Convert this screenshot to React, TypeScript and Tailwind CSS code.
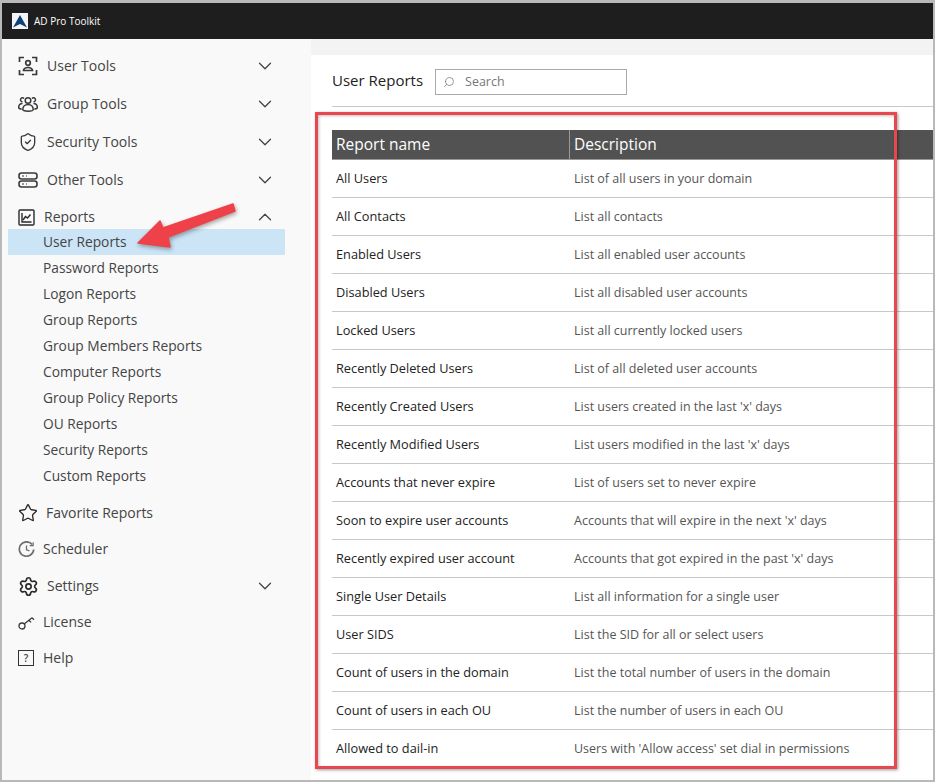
import { ChevronDown, ChevronUp, Search, Settings, ShieldCheck, Star } from "lucide-react";
import type { ReactNode } from "react";

const reports = [
  ["All Users", "List of all users in your domain"],
  ["All Contacts", "List all contacts"],
  ["Enabled Users", "List all enabled user accounts"],
  ["Disabled Users", "List all disabled user accounts"],
  ["Locked Users", "List all currently locked users"],
  ["Recently Deleted Users", "List of all deleted user accounts"],
  ["Recently Created Users", "List users created in the last 'x' days"],
  ["Recently Modified Users", "List users modified in the last 'x' days"],
  ["Accounts that never expire", "List of users set to never expire"],
  ["Soon to expire user accounts", "Accounts that will expire in the next 'x' days"],
  ["Recently expired user account", "Accounts that got expired in the past 'x' days"],
  ["Single User Details", "List all information for a single user"],
  ["User SIDS", "List the SID for all or select users"],
  ["Count of users in the domain", "List the total number of users in the domain"],
  ["Count of users in each OU", "List the number of users in each OU"],
  ["Allowed to dail-in", "Users with 'Allow access' set dial in permissions"],
];

const subItems = [
  "Password Reports",
  "Logon Reports",
  "Group Reports",
  "Group Members Reports",
  "Computer Reports",
  "Group Policy Reports",
  "OU Reports",
  "Security Reports",
  "Custom Reports",
];

function UserToolsIcon() {
  return (
    <svg width="20" height="20" viewBox="0 0 20 20" fill="none" stroke="#3a3a3a" strokeWidth="1.700">
      <path d="M1.500 6V1.500H6M14 1.500H18.500V6M1.500 14V18.500H6M14 18.500H18.500V14" />
      <circle cx="10" cy="7" r="2.300" />
      <path d="M5.500 14.500c.4-2 2.300-3 4.500-3s4.100 1 4.500 3z" />
    </svg>
  );
}

function GroupIcon() {
  return (
    <svg width="20" height="18" viewBox="0 0 20 18" fill="none" stroke="#3a3a3a" strokeWidth="1.500">
      <circle cx="10" cy="5.500" r="2.800" />
      <path d="M6 3.500a2 2 0 1 0-1.500 3.300M14 3.500a2 2 0 1 1 1.500 3.300" />
      <path d="M4.800 14.500c0-3 2.200-5 5.200-5s5.200 2 5.200 5c0 2.200-10.400 2.200-10.400 0z" />
      <path d="M4.500 8.500c-2.300 0-3.800 1.700-3.800 4 0 1 1.300 1.500 3 1.500M15.500 8.500c2.300 0 3.800 1.700 3.800 4 0 1-1.300 1.500-3 1.500" />
    </svg>
  );
}

function ServerIcon() {
  return (
    <svg width="20" height="16" viewBox="0 0 20 16" fill="none" stroke="#3a3a3a" strokeWidth="1.600">
      <rect x="1" y="1" width="18" height="6" rx="2.500" />
      <rect x="1" y="9" width="18" height="6" rx="2.500" />
      <path d="M4 4h2M8 4h1M4 12h2M8 12h1" strokeWidth="1.200" />
    </svg>
  );
}

function ChartIcon() {
  return (
    <svg width="17" height="17" viewBox="0 0 17 17" fill="none" stroke="#2a2a2a" strokeWidth="1.400">
      <rect x="1" y="1" width="15" height="15" rx="1" />
      <path d="M4 4V13H13.500" />
      <path d="M5 11l2.500-3.500 2 1.500 3-3.500" />
    </svg>
  );
}

function ClockIcon() {
  return (
    <svg width="17" height="17" viewBox="0 0 17 17" fill="none" stroke="#6e6e6e" strokeWidth="1.700">
      <path d="M14.200 3.600A7.200 7.200 0 1 0 15.700 8.500" />
      <path d="M15.200 1.200v3.500h-3.500" strokeWidth="1.200" />
      <path d="M8.500 4.500v4.300l3 1" strokeWidth="1.300" />
    </svg>
  );
}

function KeyIcon() {
  return (
    <svg width="17" height="14" viewBox="0 0 17 14" fill="none" stroke="#3a3a3a" strokeWidth="1.300">
      <circle cx="4" cy="10" r="3" />
      <path d="M6.200 8L14 1.800M11 4.200l2 2.200M14 1.800l2 2" />
    </svg>
  );
}

function NavRow({ icon, label, h, chevron, gap }: { icon: ReactNode; label: string; h: string; chevron?: "up" | "down"; gap: string }) {
  return (
    <div className={`flex items-center pl-[16px] pr-[35px] ${h}`}>
      <div className={`flex items-center ${gap}`}>
        {icon}
        <span className="pb-[2px] text-[14px] text-[#444]">{label}</span>
      </div>
      {chevron === "down" && <ChevronDown className="ml-auto text-[#444]" size={22} strokeWidth={1.4} />}
      {chevron === "up" && <ChevronUp className="ml-auto text-[#444]" size={22} strokeWidth={1.4} />}
    </div>
  );
}

function Sidebar() {
  return (
    <aside className="w-[309px] shrink-0 bg-[#f9f9f9] pt-[8px]">
      <NavRow icon={<UserToolsIcon />} label="User Tools" h="h-[38px]" gap="gap-[9px]" chevron="down" />
      <NavRow icon={<GroupIcon />} label="Group Tools" h="h-[38px]" gap="gap-[9px]" chevron="down" />
      <NavRow icon={<ShieldCheck className="text-[#3a3a3a]" size={20} strokeWidth={1.6} />} label="Security Tools" h="h-[38px]" gap="gap-[9px]" chevron="down" />
      <NavRow icon={<ServerIcon />} label="Other Tools" h="h-[38px]" gap="gap-[9px]" chevron="down" />
      <div className="h-[30px] pt-[6px]">
        <NavRow icon={<ChartIcon />} label="Reports" h="h-[24px]" gap="gap-[9px]" chevron="up" />
      </div>
      <div className="ml-[6px] flex h-[26px] w-[277px] items-center bg-[#cbe4f6] pl-[35px] text-[13.75px] text-[#444]">
        User Reports
      </div>
      {subItems.map((item) => (
        <div key={item} className="flex h-[26px] items-center pl-[41px] text-[13.75px] text-[#444]">
          {item}
        </div>
      ))}
      <div className="mt-[6px]">
        <NavRow icon={<Star className="text-[#2a2a2a]" size={20} strokeWidth={1.6} />} label="Favorite Reports" h="h-[36px]" gap="gap-[8px]" />
        <NavRow icon={<ClockIcon />} label="Scheduler" h="h-[36px]" gap="gap-[8px]" />
        <NavRow icon={<Settings className="text-[#2a2a2a]" size={21} strokeWidth={1.9} />} label="Settings" h="h-[38px]" gap="gap-[8px]" chevron="down" />
        <NavRow icon={<KeyIcon />} label="License" h="h-[35px]" gap="gap-[8px]" />
        <NavRow
          icon={
            <span className="flex h-[16px] w-[16px] items-center justify-center border border-[#333] text-[10px] font-semibold text-[#444]">?</span>
          }
          label="Help"
          h="h-[36px]"
          gap="gap-[9px]"
        />
      </div>
    </aside>
  );
}

function ReportTable() {
  return (
    <div className="mt-[23px] ml-[21px]">
      <div className="flex h-[30px] items-center border-b border-[#999] bg-[#525252] text-[15.5px] text-white">
        <div className="flex h-full w-[238px] items-center border-r border-[#9a9a9a] pl-[4px]">Report name</div>
        <div className="pl-[4px]">Description</div>
      </div>
      {reports.map(([name, description]) => (
        <div key={name} className="flex h-[38px] items-center border-b border-[#c8c8c8] leading-[20px] last:border-b-0">
          <div className="w-[238px] pb-[2px] pl-[4px] text-[12.75px] text-[#222]">{name}</div>
          <div className="pl-[4px] text-[12.5px] text-[#555]">{description}</div>
        </div>
      ))}
    </div>
  );
}

function Annotations() {
  return (
    <>
      <div className="pointer-events-none absolute left-[315px] top-[112px] h-[657px] w-[582px] border-[3px] border-[#e8474f] shadow-[1px_1px_3px_rgba(0,0,0,0.4),inset_1px_1px_3px_rgba(0,0,0,0.25)]" />
      <svg className="pointer-events-none absolute left-[130px] top-[198px] drop-shadow-[1px_2px_2px_rgba(0,0,0,0.35)]" width="112" height="56" viewBox="0 0 112 56">
        <path d="M8 45L30 23L33 30L103 6L105 13L38 39L40 49Z" fill="#ef4149" stroke="#ef4149" strokeWidth="1.500" strokeLinejoin="round" />
      </svg>
    </>
  );
}

export default function App() {
  return (
    <div className="relative h-[782px] w-[935px] overflow-hidden bg-[#b9b9b9] px-[2px] pt-[3px] pb-[2px] font-['Open_Sans',sans-serif]">
      <div className="flex h-full flex-col bg-[#f3f3f3]">
        <header className="flex h-[36px] shrink-0 items-center gap-[6px] bg-[#1e1e1e] pl-[10px]">
          <svg width="16" height="16" viewBox="0 0 16 16">
            <rect width="16" height="16" fill="#f2f6fa" />
            <path d="M8 2L15 14.500L8 11L1 14.500Z" fill="#123f78" />
          </svg>
          <span className="text-[10px] text-white">AD Pro Toolkit</span>
        </header>
        <div className="flex min-h-0 flex-1">
          <Sidebar />
          <main className="mt-[16px] flex-1 bg-white">
            <div className="ml-[21px] flex h-[52px] items-center gap-[12px] border-b border-[#c8c8c8] pt-[2px]">
              <h1 className="-mt-[2px] text-[15px] text-[#222]">User Reports</h1>
              <div className="flex h-[26px] w-[192px] items-center gap-[10px] border border-[#aaa] pl-[7px] text-[12.5px] text-[#777]">
                <Search size={12} className="-scale-x-100" strokeWidth={1.5} />
                <span className="pt-[2px]">Search</span>
              </div>
            </div>
            <ReportTable />
          </main>
        </div>
      </div>
      <Annotations />
    </div>
  );
}
